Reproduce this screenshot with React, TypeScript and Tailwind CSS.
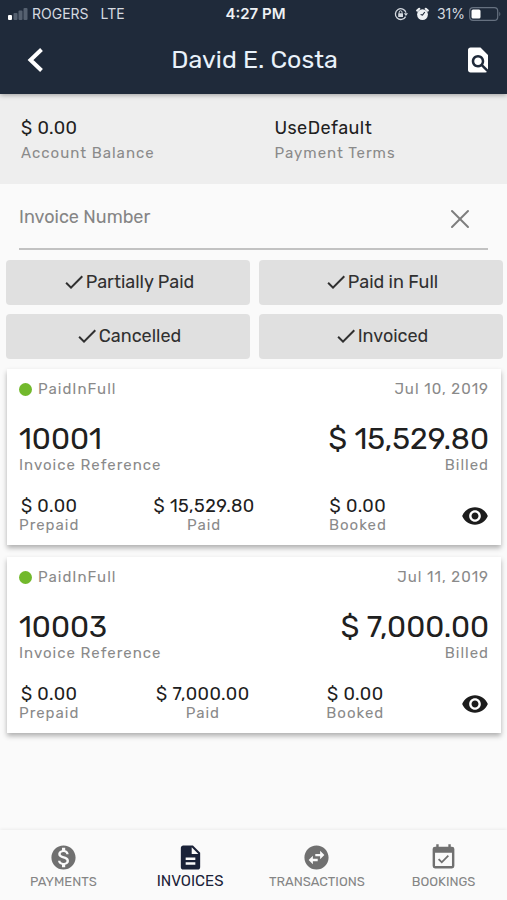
import type { ReactNode } from "react";
import { MdCheck, MdDescription, MdFindInPage, MdMonetizationOn, MdSwapHorizontalCircle, MdVisibility } from "react-icons/md";
import { X } from "lucide-react";

type Invoice = { id: string; date: string; billed: string; prepaid: string; paid: string; booked: string };

const invoices: Invoice[] = [
  { id: "10001", date: "Jul 10, 2019", billed: "$ 15,529.80", prepaid: "$ 0.00", paid: "$ 15,529.80", booked: "$ 0.00" },
  { id: "10003", date: "Jul 11, 2019", billed: "$ 7,000.00", prepaid: "$ 0.00", paid: "$ 7,000.00", booked: "$ 0.00" },
];

const filters = ["Partially Paid", "Paid in Full", "Cancelled", "Invoiced"];

function StatusBar() {
  return (
    <div className="grid h-7 grid-cols-[1fr_auto_1fr] items-center pr-1 pl-2 font-['Inter',sans-serif] text-sm text-[#d5dae0]">
      <div className="flex items-center gap-1">
        <svg width="20" height="12" viewBox="0 0 20 12" aria-hidden="true">
          <rect x="0" y="7" width="4" height="5" rx="1" fill="#fff" />
          <rect x="5.5" y="5" width="4" height="7" rx="1" fill="#566170" />
          <rect x="10.5" y="2.5" width="4" height="9.5" rx="1" fill="#566170" />
          <rect x="15.5" y="0" width="4" height="12" rx="1" fill="#566170" />
        </svg>
        <span>ROGERS</span>
        <span className="ml-2">LTE</span>
      </div>
      <span className="text-[15px] font-semibold text-[#eef1f4]">4:27 PM</span>
      <div className="flex items-center justify-end">
        <svg width="14" height="14" viewBox="0 0 14 14" fill="none" aria-hidden="true">
          <path d="M11.6 9.6A5.4 5.4 0 1 1 12 5.6" stroke="#d5dae0" strokeWidth="1.3" />
          <path d="M9.8 6.2H14L11.9 9z" fill="#d5dae0" />
          <rect x="4.2" y="6.3" width="4.8" height="3.6" rx=".5" fill="#d5dae0" />
          <path d="M5.2 6.5V5.2a1.4 1.4 0 0 1 2.8 0v1.3" stroke="#d5dae0" strokeWidth="1" />
        </svg>
        <svg className="ml-2" width="13" height="14" viewBox="0 0 13 14" fill="none" aria-hidden="true">
          <circle cx="6.5" cy="7.6" r="5.4" fill="#eef1f4" />
          <path d="M1.2 3.6 3.2 1.8M11.8 3.6 9.8 1.8" stroke="#eef1f4" strokeWidth="2.2" strokeLinecap="round" />
          <path d="M8.8 5 6.5 8 4.6 7.4" stroke="#1f2a3a" strokeWidth="1.1" />
        </svg>
        <span className="ml-2">31%</span>
        <svg className="mr-0.5 ml-1" width="32" height="14" viewBox="0 0 32 14" fill="none" aria-hidden="true">
          <rect x=".7" y=".7" width="28" height="12.6" rx="3.4" stroke="#667180" strokeWidth="1.2" />
          <rect x="2.5" y="2.5" width="9" height="9" rx="1.5" fill="#fff" />
          <path d="M30.3 4.8c1.4.7 1.4 3.7 0 4.4z" fill="#667180" />
        </svg>
      </div>
    </div>
  );
}

function Caption({ children }: { children: ReactNode }) {
  return <span className="text-[15px] leading-5 tracking-[1px] text-[#8a8a8a]">{children}</span>;
}

function Amount({ value, label }: { value: string; label: string }) {
  return (
    <div className="flex flex-col items-center">
      <span className="text-lg leading-[19px] tracking-wide text-[#202020]">{value}</span>
      <span className="text-[15px] leading-[19px] tracking-[1px] text-[#8a8a8a]">{label}</span>
    </div>
  );
}

function InvoiceCard({ invoice }: { invoice: Invoice }) {
  return (
    <article className="bg-white px-3 py-2.5 shadow-[0_3px_5px_rgba(0,0,0,0.3)]">
      <div className="flex items-center justify-between">
        <div className="flex items-center gap-1.5">
          <span className="size-[13px] rounded-full bg-[#72b92c]" />
          <Caption>PaidInFull</Caption>
        </div>
        <Caption>{invoice.date}</Caption>
      </div>
      <div className="mt-6 flex justify-between">
        <div className="flex flex-col">
          <span className="text-3xl leading-8 text-[#202020]">{invoice.id}</span>
          <Caption>Invoice Reference</Caption>
        </div>
        <div className="flex flex-col items-end">
          <span className="text-3xl leading-8 text-[#202020]">{invoice.billed}</span>
          <Caption>Billed</Caption>
        </div>
      </div>
      <div className="mt-[22px] flex items-center justify-between">
        <Amount value={invoice.prepaid} label="Prepaid" />
        <Amount value={invoice.paid} label="Paid" />
        <Amount value={invoice.booked} label="Booked" />
        <button type="button" aria-label="View invoice" className="text-[#1c1c1c]">
          <MdVisibility size={28} />
        </button>
      </div>
    </article>
  );
}

function CalendarCheck() {
  return (
    <svg width="29" height="29" viewBox="0 0 24 24" fill="currentColor" aria-hidden="true">
      <path d="M19 3h-1V1h-2v2H8V1H6v2H5a2 2 0 0 0-2 2v14a2 2 0 0 0 2 2h14a2 2 0 0 0 2-2V5a2 2 0 0 0-2-2m0 16H5V8h14zM16.53 11.06 15.47 10l-4.88 4.88-2.12-2.12-1.06 1.06L10.59 17z" />
    </svg>
  );
}

function NavItem({ icon, label, active = false }: { icon: ReactNode; label: string; active?: boolean }) {
  return (
    <a
      href="#"
      aria-current={active ? "page" : undefined}
      className={active ? "flex flex-col items-center text-[#1a2238]" : "flex flex-col items-center text-[#707070]"}
    >
      {icon}
      <span className={active ? "text-[15px] leading-[18px]" : "text-[13px] leading-5 text-[#858585]"}>{label}</span>
    </a>
  );
}

export default function App() {
  return (
    <div className="flex min-h-screen flex-col bg-[#fafafa] font-['Rubik','Roboto',sans-serif]">
      <header className="z-10 bg-[#1f2a3a] pb-0.5 shadow-[0_1px_5px_rgba(0,0,0,0.35)]">
        <StatusBar />
        <div className="grid h-16 grid-cols-[1fr_auto_1fr] items-center pr-3.5 pl-4">
          <button type="button" aria-label="Back" className="ml-2.5 justify-self-start">
            <svg width="20" height="28" viewBox="0 0 20 28" fill="none" aria-hidden="true">
              <path d="M15.5 3.5 4.5 14l11 10.5" stroke="#fff" strokeWidth="4" />
            </svg>
          </button>
          <h1 className="text-[25px] leading-8 text-[#e9f2fa]">David E. Costa</h1>
          <button type="button" aria-label="Find in page" className="justify-self-end text-white">
            <MdFindInPage size={30} />
          </button>
        </div>
      </header>

      <main className="flex-1">
        <section className="grid grid-cols-2 bg-[#eeeeee] pt-[22px] pb-[21px]">
          <div className="flex flex-col gap-[3px] px-[21px]">
            <span className="text-lg leading-6 tracking-wide text-[#202020]">$ 0.00</span>
            <Caption>Account Balance</Caption>
          </div>
          <div className="flex flex-col gap-[3px] px-[21px]">
            <span className="text-lg leading-6 tracking-wide text-[#202020]">UseDefault</span>
            <Caption>Payment Terms</Caption>
          </div>
        </section>

        <form className="mx-[19px] flex h-[66px] items-center border-b-2 border-[#c2c2c2] pt-0.5">
          <input
            type="text"
            aria-label="Invoice Number"
            placeholder="Invoice Number"
            className="min-w-0 flex-1 bg-transparent text-lg text-[#202020] outline-none placeholder:text-[#858585]"
          />
          <button type="reset" aria-label="Clear" className="mt-1 mr-3 text-[#7d7d7d]">
            <X size={32} strokeWidth={1.5} />
          </button>
        </form>

        <div className="grid grid-cols-2 gap-[9px] pt-2.5 pr-1 pl-1.5">
          {filters.map((name) => (
            <button
              key={name}
              type="button"
              aria-pressed="true"
              className="flex h-[45px] items-center justify-center rounded bg-[#e0e0e0] pb-0.5 text-lg text-[#303030]"
            >
              <MdCheck size={24} />
              {name}
            </button>
          ))}
        </div>

        <div className="flex flex-col gap-3 py-2.5 pr-1.5 pl-[7px]">
          {invoices.map((invoice) => (
            <InvoiceCard key={invoice.id} invoice={invoice} />
          ))}
        </div>
      </main>

      <nav className="sticky bottom-0 grid h-[70px] grid-cols-4 bg-[#fafafa] pt-[13px] shadow-[0_-1px_3px_rgba(0,0,0,0.06)]">
        <NavItem icon={<MdMonetizationOn size={29} />} label="PAYMENTS" />
        <NavItem active icon={<MdDescription size={29} />} label="INVOICES" />
        <NavItem icon={<MdSwapHorizontalCircle size={29} />} label="TRANSACTIONS" />
        <NavItem icon={<CalendarCheck />} label="BOOKINGS" />
      </nav>
    </div>
  );
}
